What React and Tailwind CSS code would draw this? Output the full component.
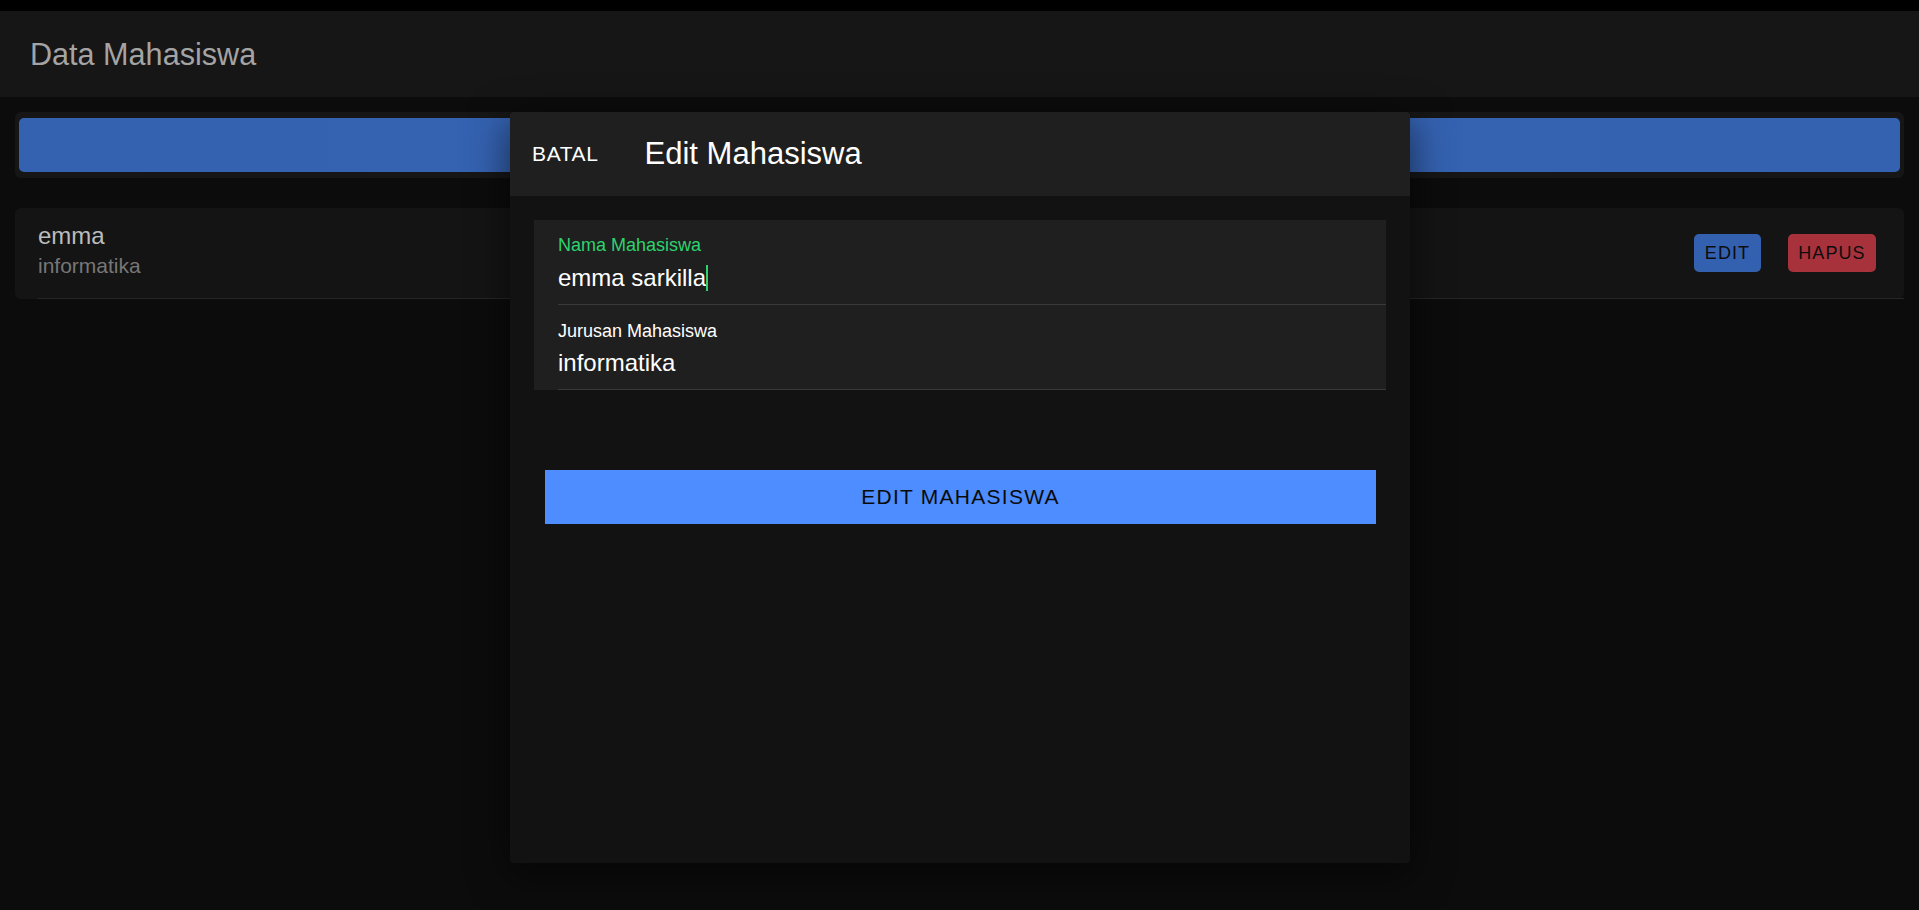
import React from "react";

export default function App() {
  const [nama, setNama] = React.useState("emma sarkilla");
  const [jurusan, setJurusan] = React.useState("informatika");

  return (
    <div className="relative h-[910px] w-full overflow-hidden bg-[#0c0c0c] font-['Liberation_Sans',Arial,sans-serif]">
      {/* top strip */}
      <div className="h-[11px] bg-black" />

      <header className="flex h-[86px] items-center bg-[#161616] pl-[30px]">
        <h1 className="text-[30.6px] leading-none text-[#a4a4a4]">Data Mahasiswa</h1>
      </header>

      <main className="px-[15px] pt-[15px]">
        <div className="rounded-[6px] bg-[#161616] px-[4px] py-[6px]">
          <div className="h-[54px] rounded-[5px] bg-gradient-to-r from-[#3461b0] via-[#3562b1] to-[#3461b0]" />
        </div>

        <div className="mt-[30px] flex h-[91px] rounded-[6px] bg-[#141414]">
          <div className="ml-[23px] flex flex-1 items-center justify-between border-b border-[#262626] pr-[28px]">
            <div className="flex flex-col self-start pt-[14px]">
              <span className="text-[24px] leading-[28px] text-[#bcbcbc]">emma</span>
              <span className="mt-[3px] text-[21px] leading-[26px] text-[#777777]">informatika</span>
            </div>
            <div className="flex items-center gap-[27px]">
              <button className="h-[38px] w-[67px] rounded-[5px] bg-[#3361b0] text-[18px] tracking-[0.06em] text-[#0d0d0d]">
                EDIT
              </button>
              <button className="h-[38px] w-[88px] rounded-[5px] bg-[#a8323c] text-[18px] tracking-[0.06em] text-[#0d0d0d]">
                HAPUS
              </button>
            </div>
          </div>
        </div>
      </main>

      {/* modal */}
      <div className="absolute left-[510px] top-[112px] flex h-[751px] w-[900px] flex-col overflow-hidden rounded-[4px] bg-[#121212] shadow-[0_10px_40px_rgba(0,0,0,0.6)]">
        <div className="flex h-[84px] items-center bg-[#1f1f1f] pl-[22px]">
          <button className="text-[21px] tracking-[0.03em] text-white">BATAL</button>
          <h2 className="ml-[46px] text-[31px] text-white">Edit Mahasiswa</h2>
        </div>

        <div className="px-[24px] pt-[24px]">
          <div className="bg-[#1f1f1f]">
            <label className="ml-[24px] flex h-[85px] flex-col border-b border-[#3a3a3a]">
              <span className="mt-[15px] text-[18px] leading-[20px] text-[#2dd36f]">Nama Mahasiswa</span>
              <div className="mt-[10px] flex items-center">
                <span className="text-[24px] leading-[26px] text-white">{nama}</span>
                <span className="h-[26px] w-[2px] bg-[#2dd36f]" />
              </div>
            </label>
            <label className="ml-[24px] flex h-[85px] flex-col border-b border-[#3a3a3a]">
              <span className="mt-[16px] text-[18px] leading-[20px] text-white">Jurusan Mahasiswa</span>
              <input
                value={jurusan}
                onChange={(e) => setJurusan(e.target.value)}
                className="mt-[8px] h-[28px] bg-transparent text-[24px] text-white outline-none"
              />
            </label>
          </div>

          <button
            onClick={() => setNama(nama)}
            className="mx-[11px] mt-[80px] flex h-[54px] w-[831px] items-center justify-center bg-[#4d8dff] text-[21px] tracking-[0.06em] text-[#0b0b0b]"
          >
            EDIT MAHASISWA
          </button>
        </div>
      </div>
    </div>
  );
}
